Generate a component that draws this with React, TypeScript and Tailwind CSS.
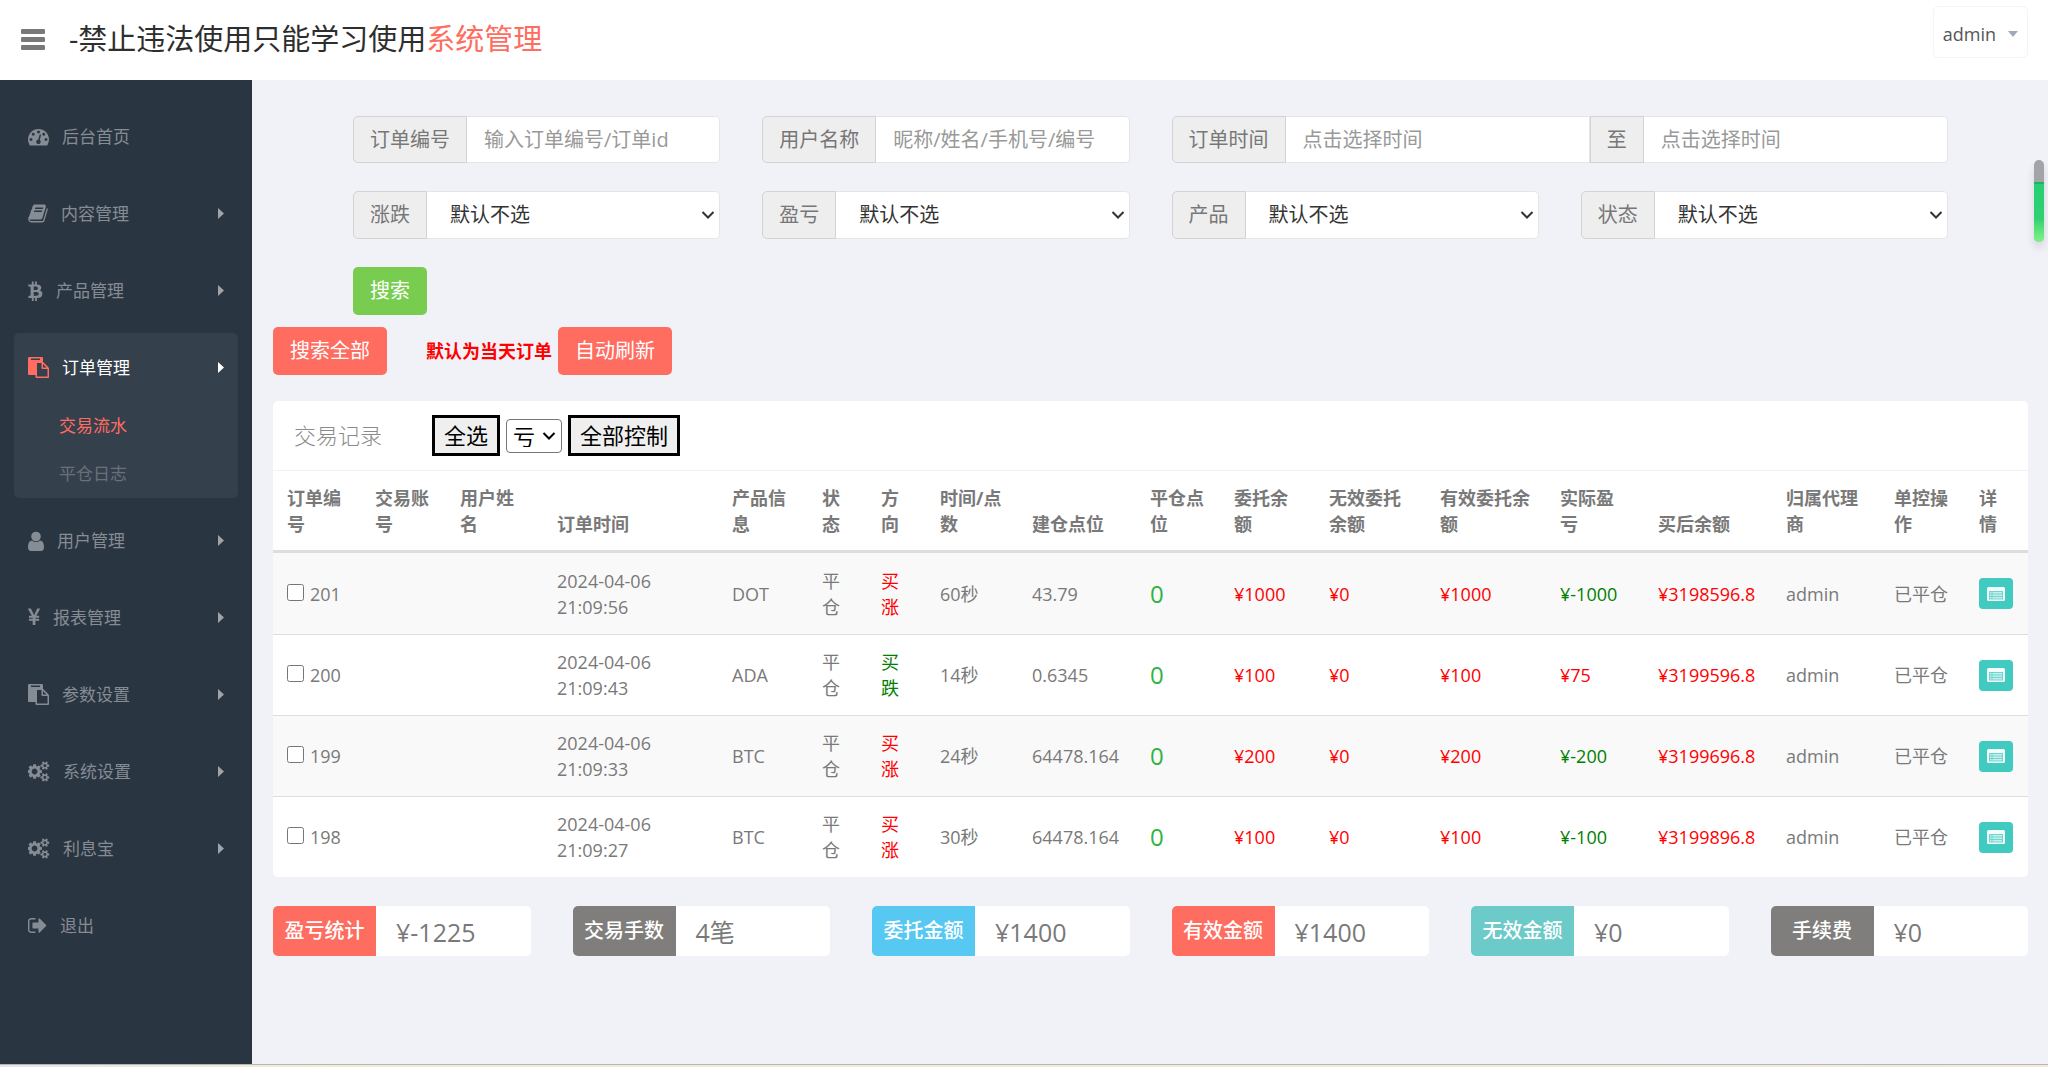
import { useState } from "react";

interface IconProps {
  className?: string;
}

interface MenuItem {
  id: string;
  name: string;
  icon: string;
  box: string;
  size: string;
  caret?: boolean;
  children?: { name: string; active?: boolean }[];
}

interface Order {
  id: number;
  time: string;
  product: string;
  direction: string;
  seconds: string;
  openPrice: string;
  amount: string;
  profit: string;
  balance: string;
}

const ICONS = {
  dashboard:
    "M384 1152q0-53-37.5-90.5t-90.5-37.5-90.5 37.5-37.5 90.5 37.5 90.5 90.5 37.5 90.5-37.5 37.5-90.5zm192-448q0-53-37.5-90.5t-90.5-37.5-90.5 37.5-37.5 90.5 37.5 90.5 90.5 37.5 90.5-37.5 37.5-90.5zm428 481l101-382q6-26-7.5-48.5t-38.5-29.5-48 6.5-30 39.5l-101 382q-60 5-107 43.5t-63 98.5q-20 77 20 146t117 89 146-20 89-117q16-60-6-117t-72-91zm660-33q0-53-37.5-90.5t-90.5-37.5-90.5 37.5-37.5 90.5 37.5 90.5 90.5 37.5 90.5-37.5 37.5-90.5zm-640-640q0-53-37.5-90.5t-90.5-37.5-90.5 37.5-37.5 90.5 37.5 90.5 90.5 37.5 90.5-37.5 37.5-90.5zm448 192q0-53-37.5-90.5t-90.5-37.5-90.5 37.5-37.5 90.5 37.5 90.5 90.5 37.5 90.5-37.5 37.5-90.5zm320 448q0 261-141 483-19 29-54 29h-1402q-35 0-54-29-141-221-141-483 0-182 71-348t191-286 286-191 348-71 348 71 286 191 191 286 71 348z",
  book: "M1703 478q40 57 18 129l-275 906q-19 64-76.5 107.5t-122.5 43.5h-923q-77 0-148.5-53.5t-99.5-131.5q-24-67-2-127 0-4 3-27t4-37q1-8-3-21.5t-3-19.5q2-11 8-21t16.5-23.5 16.5-23.5q23-38 45-91.5t30-91.5q3-10 .5-30t-.5-28q3-11 17-28t17-23q21-36 42-92t25-90q1-9-2.5-32t.5-28q4-13 22-30.5t22-22.5q19-26 42.5-84.5t27.5-96.5q1-8-3-25.5t-2-26.5q2-8 9-18t18-23 17-21q8-12 16.5-30.5t15-35 16-36 19.5-32 26.5-23.5 36-11.5 47.5 5.5l-1 3q38-9 51-9h761q74 0 114 56t18 130l-274 906q-36 119-71.5 153.5t-128.5 34.5h-869q-27 0-38 15-11 16-1 43 24 70 144 70h923q29 0 56-15.5t35-41.5l300-987q7-22 5-57 38 15 59 43zm-1064 2q-4 13 2 22.5t20 9.5h608q13 0 25.5-9.5t16.5-22.5l21-64q4-13-2-22.5t-20-9.5h-608q-13 0-25.5 9.5t-16.5 22.5zm-83 256q-4 13 2 22.5t20 9.5h608q13 0 25.5-9.5t16.5-22.5l21-64q4-13-2-22.5t-20-9.5h-608q-13 0-25.5 9.5t-16.5 22.5z",
  btc: "M1322 640q18 182-131 258 117 28 175 103t45 214q-7 71-32.5 125t-64.5 89-97 58.5-121.5 34.5-145.5 15v255h-154v-251q-80 0-122-1v252h-154v-255q-18 0-54-.5t-55-.5h-200l31-183h111q50 0 58-51v-402h16q-6-1-16-1v-287q-13-68-89-68h-111v-164l212 1q64 0 97-1v-252h154v247q82-2 122-2v-245h154v252q79 7 140 22.5t113 45 82.5 78 36.5 114.5zm-215 545q0-36-15-64t-37-46-57.5-30.5-65.5-18.5-74-9-69-3-64.5 1-47.5 1v338q8 0 37 .5t48 .5 53-1.5 58.5-4 57-8.5 55.5-14 47.5-21 39.5-30 24.5-40 9.5-51zm-71-476q0-33-12.5-58.5t-30.5-42-48-28-55-16.5-61.5-8-58-2.5-54 1-39.5.5v307q5 0 34.5.5t46.5 0 50-2 55-5.5 51.5-11 48.5-18.5 37-27 27-38.5 9-51z",
  paste:
    "M768 1664h896v-640h-416q-40 0-68-28t-28-68v-416h-384v1152zm256-1440v-64q0-13-9.5-22.5t-22.5-9.5h-704q-13 0-22.5 9.5t-9.5 22.5v64q0 13 9.5 22.5t22.5 9.5h704q13 0 22.5-9.5t9.5-22.5zm256 672h299l-299-299v299zm512 128v672q0 40-28 68t-68 28h-960q-40 0-68-28t-28-68v-160h-544q-40 0-68-28t-28-68v-1344q0-40 28-68t68-28h1088q40 0 68 28t28 68v328q21 13 36 28l408 408q28 28 48 76t20 88z",
  user: "M1536 1399q0 109-62.5 187t-150.5 78h-854q-88 0-150.5-78t-62.5-187q0-85 8.5-160.5t31.5-152 58.5-131 94-89 134.5-34.5q131 128 313 128t313-128q76 0 134.5 34.5t94 89 58.5 131 31.5 152 8.5 160.5zm-256-887q0 159-112.5 271.5t-271.5 112.5-271.5-112.5-112.5-271.5 112.5-271.5 271.5-112.5 271.5 112.5 112.5 271.5z",
  yen: "M985.5 1536h-172q-13 0-22.5-9t-9.5-23v-330h-288q-13 0-22.5-9t-9.5-23v-103q0-13 9.5-22.5t22.5-9.5h288v-85h-288q-13 0-22.5-9t-9.5-23v-104q0-13 9.5-22.5t22.5-9.5h214l-321-578q-8-16 0-32 10-16 28-16h194q19 0 29 18l215 425q19 38 56 125 10-24 30.5-68t27.5-61l191-420q8-19 29-19h191q17 0 27 16 9 14 1 31l-313 579h215q13 0 22.5 9.5t9.5 22.5v104q0 14-9.5 23t-22.5 9h-290v85h290q13 0 22.5 9.5t9.5 22.5v103q0 14-9.5 23t-22.5 9h-290v330q0 13-9.5 22.5t-22.5 9.5z",
  cogs: "M832 896q0-106-75-181t-181-75-181 75-75 181 75 181 181 75 181-75 75-181zm768 512q0-52-38-90t-90-38-90 38-38 90q0 53 37.5 90.5t90.5 37.5 90.5-37.5 37.5-90.5zm0-1024q0-52-38-90t-90-38-90 38-38 90q0 53 37.5 90.5t90.5 37.5 90.5-37.5 37.5-90.5zm-384 421v185q0 10-7 19.5t-16 10.5l-155 24q-11 35-32 76 34 48 90 115 7 11 7 20 0 12-7 19-23 30-82.5 89.5t-78.5 59.5q-11 0-21-7l-115-90q-37 19-77 31-11 108-23 155-7 24-30 24h-186q-11 0-20-7.5t-10-17.5l-23-153q-34-10-75-31l-118 89q-7 7-20 7-11 0-21-8-144-133-144-160 0-9 7-19 10-14 41-53t47-61q-23-44-35-82l-152-24q-10-1-17-9.5t-7-19.5v-185q0-10 7-19.5t16-10.5l155-24q11-35 32-76-34-48-90-115-7-11-7-20 0-12 7-20 22-30 82-89t79-59q11 0 21 7l115 90q34-18 77-32 11-108 23-154 7-24 30-24h186q11 0 20 7.5t10 17.5l23 153q34 10 75 31l118-89q8-7 20-7 11 0 21 8 144 133 144 160 0 8-7 19-12 16-42 54t-45 60q23 48 34 82l152 23q10 2 17 10.5t7 19.5zm640 533v140q0 16-149 31-12 27-30 52 51 113 51 138 0 4-4 7-122 71-124 71-8 0-46-47t-52-68q-20 2-30 2t-30-2q-14 21-52 68t-46 47q-2 0-124-71-4-3-4-7 0-25 51-138-18-25-30-52-149-15-149-31v-140q0-16 149-31 13-29 30-52-51-113-51-138 0-4 4-7 4-2 35-20t59-34 30-16q8 0 46 46.5t52 67.5q20-2 30-2t30 2q51-71 92-112l6-2q4 0 124 70 4 3 4 7 0 25-51 138 17 23 30 52 149 15 149 31zm0-1024v140q0 16-149 31-12 27-30 52 51 113 51 138 0 4-4 7-122 71-124 71-8 0-46-47t-52-68q-20 2-30 2t-30-2q-14 21-52 68t-46 47q-2 0-124-71-4-3-4-7 0-25 51-138-18-25-30-52-149-15-149-31v-140q0-16 149-31 13-29 30-52-51-113-51-138 0-4 4-7 4-2 35-20t59-34 30-16q8 0 46 46.5t52 67.5q20-2 30-2t30 2q51-71 92-112l6-2q4 0 124 70 4 3 4 7 0 25-51 138 17 23 30 52 149 15 149 31z",
  signOut:
    "M704 1440q0 4 1 20t.5 26.5-3 23.5-10 19.5-20.5 6.5h-320q-119 0-203.5-84.5t-84.5-203.5v-704q0-119 84.5-203.5t203.5-84.5h320q13 0 22.5 9.5t9.5 22.5q0 4 1 20t.5 26.5-3 23.5-10 19.5-20.5 6.5h-320q-66 0-113 47t-47 113v704q0 66 47 113t113 47h312l11.5 1 11.5 3 8 5.5 7 9 2 13.5zm928-544q0 26-19 45l-544 544q-19 19-45 19t-45-19-19-45v-288h-448q-26 0-45-19t-19-45v-384q0-26 19-45t45-19h448v-288q0-26 19-45t45-19 45 19l544 544q19 19 19 45z",
};

const MENU: MenuItem[] = [
  { id: "home", name: "后台首页", icon: ICONS.dashboard, box: "0 0 1792 1792", size: "w-[21px]" },
  { id: "content", name: "内容管理", icon: ICONS.book, box: "64 0 1664 1792", size: "w-5", caret: true },
  { id: "product", name: "产品管理", icon: ICONS.btc, box: "190 0 1280 1792", size: "w-[15px]", caret: true },
  {
    id: "order",
    name: "订单管理",
    icon: ICONS.paste,
    box: "0 0 1792 1792",
    size: "w-[21px]",
    caret: true,
    children: [{ name: "交易流水", active: true }, { name: "平仓日志" }],
  },
  { id: "user", name: "用户管理", icon: ICONS.user, box: "256 0 1280 1664", size: "w-4", caret: true },
  { id: "report", name: "报表管理", icon: ICONS.yen, box: "382 0 1027 1792", size: "w-3", caret: true },
  { id: "params", name: "参数设置", icon: ICONS.paste, box: "0 0 1792 1792", size: "w-[21px]", caret: true },
  { id: "system", name: "系统设置", icon: ICONS.cogs, box: "0 0 1920 1792", size: "w-[22px]", caret: true },
  { id: "interest", name: "利息宝", icon: ICONS.cogs, box: "0 0 1920 1792", size: "w-[22px]", caret: true },
  { id: "logout", name: "退出", icon: ICONS.signOut, box: "96 0 1568 1792", size: "w-[19px]" },
];

const COLUMNS = [
  { name: "订单编号", width: "w-[88px]" },
  { name: "交易账号", width: "w-[85px]" },
  { name: "用户姓名", width: "w-[97px]" },
  { name: "订单时间", width: "w-[175px]" },
  { name: "产品信息", width: "w-[90px]" },
  { name: "状态", width: "w-[59px]" },
  { name: "方向", width: "w-[59px]" },
  { name: "时间/点数", width: "w-[92px]" },
  { name: "建仓点位", width: "w-[118px]" },
  { name: "平仓点位", width: "w-[84px]" },
  { name: "委托余额", width: "w-[95px]" },
  { name: "无效委托余额", width: "w-[111px]" },
  { name: "有效委托余额", width: "w-[120px]" },
  { name: "实际盈亏", width: "w-[98px]" },
  { name: "买后余额", width: "w-[128px]" },
  { name: "归属代理商", width: "w-[108px]" },
  { name: "单控操作", width: "w-[85px]" },
  { name: "详情", width: "w-[63px]" },
];

const ORDERS: Order[] = [
  { id: 201, time: "2024-04-06 21:09:56", product: "DOT", direction: "买涨", seconds: "60秒", openPrice: "43.79", amount: "¥1000", profit: "¥-1000", balance: "¥3198596.8" },
  { id: 200, time: "2024-04-06 21:09:43", product: "ADA", direction: "买跌", seconds: "14秒", openPrice: "0.6345", amount: "¥100", profit: "¥75", balance: "¥3199596.8" },
  { id: 199, time: "2024-04-06 21:09:33", product: "BTC", direction: "买涨", seconds: "24秒", openPrice: "64478.164", amount: "¥200", profit: "¥-200", balance: "¥3199696.8" },
  { id: 198, time: "2024-04-06 21:09:27", product: "BTC", direction: "买涨", seconds: "30秒", openPrice: "64478.164", amount: "¥100", profit: "¥-100", balance: "¥3199896.8" },
];

const STATS = [
  { name: "盈亏统计", value: "¥-1225", color: "bg-[#ff6c60]" },
  { name: "交易手数", value: "4笔", color: "bg-[#7f7e7c]" },
  { name: "委托金额", value: "¥1400", color: "bg-[#57c8f2]" },
  { name: "有效金额", value: "¥1400", color: "bg-[#ff6c60]" },
  { name: "无效金额", value: "¥0", color: "bg-[#6ccac9]" },
  { name: "手续费", value: "¥0", color: "bg-[#7f7e7c]" },
];

const ADDON = "flex items-center shrink-0 px-4 bg-[#eeeeee] border border-[#d3d3d6] text-[#777777]";
const CONTROL = "h-full w-full min-w-0 bg-white border border-l-0 border-[#e5e5e8] px-[17px] outline-none placeholder:text-[#999999]";

function ChevronDown({ className }: IconProps) {
  return (
    <svg viewBox="0 0 14 9" fill="none" stroke="currentColor" strokeWidth="2" className={className}>
      <path d="M1.5 1.5 7 7l5.5-5.5" />
    </svg>
  );
}

function ListIcon({ className }: IconProps) {
  return (
    <svg viewBox="0 0 18 14" className={className}>
      <rect width="18" height="14" rx="1.5" fill="#f4fdfc" />
      <path d="M2 4h14v8H2z" fill="#c4efec" />
      <path d="M2 4.5h14M2 7h14M2 9.5h14M2 12h14M2.5 4v8M5 4v8M15.5 4v8" stroke="#6fd6cf" fill="none" />
    </svg>
  );
}

function TextField({ id, label, placeholder }: { id: string; label: string; placeholder: string }) {
  return (
    <div className="flex h-[47px]">
      <label htmlFor={id} className={`${ADDON} rounded-l-[5px]`}>
        {label}
      </label>
      <input id={id} type="text" placeholder={placeholder} className={`${CONTROL} rounded-r-[5px]`} />
    </div>
  );
}

function SelectField({ id, label }: { id: string; label: string }) {
  return (
    <div className="flex h-12">
      <label htmlFor={id} className={`${ADDON} rounded-l-[5px]`}>
        {label}
      </label>
      <div className="relative flex-1 min-w-0">
        <select id={id} className={`${CONTROL} appearance-none rounded-r-[5px] pl-[23px] text-[#333333]`}>
          <option>默认不选</option>
        </select>
        <ChevronDown className="absolute right-[5px] top-1/2 -translate-y-1/2 w-[14px] h-[9px] text-[#333333] pointer-events-none" />
      </div>
    </div>
  );
}

function Header() {
  return (
    <header className="flex items-start justify-between h-20 bg-white pl-[21px] pr-5">
      <div className="flex items-center h-20 gap-6 pb-[2px]">
        <button type="button" aria-label="切换菜单" className="text-[#797979] cursor-pointer">
          <svg viewBox="0 0 24 21" fill="currentColor" className="w-6 h-[21px]">
            <rect width="24" height="5" rx="1.2" />
            <rect y="8" width="24" height="5" rx="1.2" />
            <rect y="16" width="24" height="5" rx="1.2" />
          </svg>
        </button>
        <a href="#" className="text-[29px] text-[#2e2e2e]">
          -禁止违法使用只能学习使用<span className="text-[#ff6c60]">系统管理</span>
        </a>
      </div>
      <button type="button" className="flex items-center gap-3 mt-[6px] h-[52px] pl-[9px] pr-[9px] pt-1 border border-[#f4f4f6] rounded-[5px] text-[18px] text-[#555555] cursor-pointer">
        admin
        <svg viewBox="0 0 10 6" className="w-[10px] h-[6px]" fill="#a1a9b9">
          <path d="M0 0h10L5 6z" />
        </svg>
      </button>
    </header>
  );
}

function Sidebar() {
  return (
    <aside className="w-[252px] shrink-0 bg-[#2a3542] px-[14px] pt-[22px]">
      <ul className="flex flex-col gap-2">
        {MENU.map((item) => {
          const isOpen = !!item.children;
          return (
            <li key={item.id} className={`rounded-[5px] ${isOpen ? "bg-[#35404d]" : ""}`}>
              <a href="#" className={`flex items-center h-[69px] px-[14px] text-[17px] ${isOpen ? "text-white" : "text-[#868c94]"}`}>
                <svg viewBox={item.box} fill="currentColor" className={`${item.size} h-[21px] mr-[13px] ${isOpen ? "text-[#ff6c60]" : ""}`}>
                  <path d={item.icon} />
                </svg>
                {item.name}
                {item.caret && (
                  <svg viewBox="0 0 6 11" className={`ml-auto w-[6px] h-[11px] ${isOpen ? "text-white" : "text-[#a0a4a9]"}`} fill="currentColor">
                    <path d="M0 0v11l6-5.5z" />
                  </svg>
                )}
              </a>
              {item.children && (
                <ul>
                  {item.children.map((sub) => (
                    <li key={sub.name}>
                      <a href="#" className={`flex items-center h-12 pl-[45px] text-[17px] ${sub.active ? "text-[#ff6c60]" : "text-[#68717b]"}`}>
                        {sub.name}
                      </a>
                    </li>
                  ))}
                </ul>
              )}
            </li>
          );
        })}
      </ul>
    </aside>
  );
}

function SearchForm() {
  return (
    <form className="px-20 grid grid-cols-4 gap-x-[42px] gap-y-7 text-[20px]" onSubmit={(e) => e.preventDefault()}>
      <TextField id="order-id" label="订单编号" placeholder="输入订单编号/订单id" />
      <TextField id="username" label="用户名称" placeholder="昵称/姓名/手机号/编号" />
      <div className="col-span-2 flex h-[47px]">
        <label htmlFor="start-time" className={`${ADDON} rounded-l-[5px]`}>
          订单时间
        </label>
        <input id="start-time" type="text" placeholder="点击选择时间" className={CONTROL} />
        <label htmlFor="end-time" className={ADDON}>
          至
        </label>
        <input id="end-time" type="text" placeholder="点击选择时间" className={`${CONTROL} rounded-r-[5px]`} />
      </div>
      <SelectField id="direction" label="涨跌" />
      <SelectField id="profit" label="盈亏" />
      <SelectField id="product" label="产品" />
      <SelectField id="status" label="状态" />
      <div className="flex">
        <button type="submit" className="h-12 px-[17px] rounded-[5px] bg-[#78cd51] text-white cursor-pointer">
          搜索
        </button>
      </div>
    </form>
  );
}

function OrderTable() {
  const [checked, setChecked] = useState<number[]>([]);

  const toggle = (id: number) => {
    setChecked(checked.includes(id) ? checked.filter((c) => c !== id) : [...checked, id]);
  };

  return (
    <section className="mt-[26px] bg-white rounded-[5px] overflow-hidden">
      {/* Panel heading */}
      <div className="flex items-center h-[70px] pl-[21px] border-b border-[#eff2f7] text-[22px] text-black">
        <h2 className="font-light text-[#8a8a8a] mr-[50px]">交易记录</h2>
        <button type="button" onClick={() => setChecked(ORDERS.map((o) => o.id))} className="h-[41px] px-[9px] bg-[#efefef] border-[3px] border-black cursor-pointer">
          全选
        </button>
        <div className="relative mx-[6px]">
          <select aria-label="盈亏控制" className="block appearance-none h-[34px] w-[56px] pl-[6px] leading-none bg-white border border-[#767676] rounded-[4px]">
            <option>亏</option>
            <option>盈</option>
          </select>
          <ChevronDown className="absolute right-[6px] top-1/2 -translate-y-1/2 w-[14px] h-[9px] pointer-events-none" />
        </div>
        <button type="button" className="h-[41px] px-[9px] bg-[#efefef] border-[3px] border-black cursor-pointer">
          全部控制
        </button>
      </div>

      <table className="w-full table-fixed border-separate border-spacing-0 text-[18px] leading-[26px] text-[#797979]">
        <thead>
          <tr>
            {COLUMNS.map((col) => (
              <th key={col.name} className={`${col.width} px-[14px] pt-[14px] pb-[13px] align-bottom text-left font-bold border-b-3 border-[#dddddd]`}>
                {col.name}
              </th>
            ))}
          </tr>
        </thead>
        <tbody className="[&_td]:px-[14px] [&_td]:h-[81px] [&_td]:border-[#dddddd] [&_tr+tr_td]:border-t [&_tr:nth-child(odd)]:bg-[#f9f9f9]">
          {ORDERS.map((order) => (
            <tr key={order.id}>
              <td>
                <label className="flex items-start gap-[6px]">
                  <input
                    type="checkbox"
                    checked={checked.includes(order.id)}
                    onChange={() => toggle(order.id)}
                    className="w-[17px] h-[17px] mt-[3px] shrink-0"
                  />
                  {order.id}
                </label>
              </td>
              <td></td>
              <td></td>
              <td>{order.time}</td>
              <td>{order.product}</td>
              <td>平仓</td>
              <td className={order.direction === "买涨" ? "text-[#ff0000]" : "text-[#008000]"}>{order.direction}</td>
              <td>{order.seconds}</td>
              <td>{order.openPrice}</td>
              <td className="text-[24px] text-[#2fb344]">0</td>
              <td className="text-[#ff0000]">{order.amount}</td>
              <td className="text-[#ff0000]">¥0</td>
              <td className="text-[#ff0000]">{order.amount}</td>
              <td className={`whitespace-nowrap ${order.profit.includes("-") ? "text-[#008000]" : "text-[#ff0000]"}`}>{order.profit}</td>
              <td className="text-[#ff0000]">{order.balance}</td>
              <td>admin</td>
              <td>已平仓</td>
              <td>
                <button type="button" aria-label="详情" className="flex items-center justify-center w-[34px] h-[31px] rounded-[4px] bg-[#41cac0] cursor-pointer">
                  <ListIcon className="w-[18px] h-[14px]" />
                </button>
              </td>
            </tr>
          ))}
        </tbody>
      </table>
    </section>
  );
}

export default function App() {
  return (
    <div className="relative flex flex-col min-h-screen bg-[#f1f2f7] font-['Open_Sans','Noto_Sans_CJK_SC',sans-serif]">
      <Header />

      <div className="flex flex-1">
        <Sidebar />

        <main className="flex-1 min-w-0 pt-9 pl-[21px] pr-5">
          <SearchForm />

          <div className="flex items-center mt-3 text-[20px] text-white">
            <button type="button" className="h-12 px-[17px] rounded-[5px] bg-[#ff6c60] cursor-pointer">
              搜索全部
            </button>
            <strong className="ml-[39px] mr-[6px] text-[18px] text-[#ff0000]">默认为当天订单</strong>
            <button type="button" className="h-12 px-[17px] rounded-[5px] bg-[#ff6c60] cursor-pointer">
              自动刷新
            </button>
          </div>

          <OrderTable />

          {/* Totals */}
          <div className="grid grid-cols-6 gap-[42px] mt-[29px]">
            {STATS.map((stat) => (
              <div key={stat.name} className="flex items-center h-[50px] bg-white rounded-[5px] overflow-hidden">
                <div className={`flex items-center justify-center w-2/5 h-full font-medium text-[20px] text-white ${stat.color}`}>{stat.name}</div>
                <div className="pl-5 pt-1 text-[25px] text-[#797979]">{stat.value}</div>
              </div>
            ))}
          </div>
        </main>
      </div>

      <div className="h-[3px] border-t border-[#b5b5b5] bg-linear-to-r from-[#e3e6ee] via-[#eef0d0] via-15% to-[#f3e9df]" />

      {/* Floating meter on the window edge */}
      <div className="absolute right-1 top-40 w-[10px] h-[82px] rounded-full overflow-hidden bg-[#a3a3a8] shadow-[0_6px_8px_rgba(0,0,0,0.12)]">
        <div className="mt-[22px] h-[60px] border-t-2 border-[#1fb266] bg-linear-to-b from-[#26cf74] via-[#2fd172] via-60% to-[#7df585]" />
      </div>
    </div>
  );
}
